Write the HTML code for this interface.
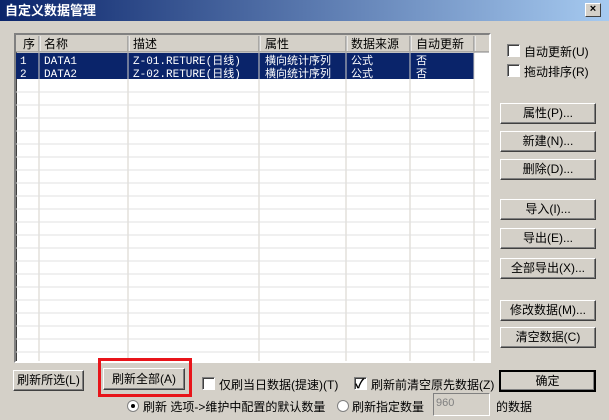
<!DOCTYPE html>
<html><head><meta charset="utf-8"><style>
*{box-sizing:border-box;margin:0;padding:0}
body{width:609px;height:420px;background:#d4d0c8;font:12px "Liberation Sans","Noto Sans CJK SC","WenQuanYi Zen Hei",sans-serif;position:relative;overflow:hidden;color:#000}
.a{position:absolute}
.title{left:0;top:0;width:609px;height:21px;background:linear-gradient(90deg,#0a246a,#a6caf0);color:#fff;font-weight:bold;font-size:13px;line-height:21px;padding-left:5px}
.close{left:585px;top:3px;width:16px;height:14px;background:#d4d0c8;border:1px solid;border-color:#fff #404040 #404040 #fff;color:#000;font-size:11px;line-height:11px;text-align:center;font-weight:bold}
.btn{position:absolute;background:#d4d0c8;border:1px solid;border-color:#fff #404040 #404040 #fff;box-shadow:inset -1px -1px #808080;text-align:center;font-size:12px}
.list{left:14px;top:33px;width:477px;height:330px;background:#fff;border:2px solid;border-color:#808080 #fff #fff #808080;box-shadow:inset 1px 1px #404040;overflow:hidden}
.cb{position:absolute;width:13px;height:13px;background:#fff;border:1px solid;border-color:#808080 #fff #fff #808080;box-shadow:inset 1px 1px #404040}
.rd{position:absolute;width:12px;height:12px;border-radius:50%;background:#fff;border:1px solid #808080}
.t{position:absolute;white-space:nowrap;font-size:12px}
</style></head><body>
<div class="a title">自定义数据管理</div>
<div class="a close">×</div>
<div class="a list">
<svg width="477" height="330" style="position:absolute;left:-2px;top:-2px">
<rect x="2" y="2" width="473" height="17" fill="#d4d0c8"/>
<rect x="2" y="20" width="458" height="26" fill="#0a246a"/>
<g stroke="#d4d0c8">
<line x1="25" y1="2" x2="25" y2="330"/><line x1="114" y1="2" x2="114" y2="330"/><line x1="245" y1="2" x2="245" y2="330"/><line x1="332" y1="2" x2="332" y2="330"/><line x1="396" y1="2" x2="396" y2="330"/><line x1="460" y1="2" x2="460" y2="330"/>
</g>
<g stroke="#e0e0e0">
<line x1="2" y1="59" x2="475" y2="59"/><line x1="2" y1="72" x2="475" y2="72"/><line x1="2" y1="85" x2="475" y2="85"/><line x1="2" y1="98" x2="475" y2="98"/><line x1="2" y1="111" x2="475" y2="111"/><line x1="2" y1="124" x2="475" y2="124"/><line x1="2" y1="137" x2="475" y2="137"/><line x1="2" y1="150" x2="475" y2="150"/><line x1="2" y1="163" x2="475" y2="163"/><line x1="2" y1="176" x2="475" y2="176"/><line x1="2" y1="189" x2="475" y2="189"/><line x1="2" y1="202" x2="475" y2="202"/><line x1="2" y1="215" x2="475" y2="215"/><line x1="2" y1="228" x2="475" y2="228"/><line x1="2" y1="241" x2="475" y2="241"/><line x1="2" y1="254" x2="475" y2="254"/><line x1="2" y1="267" x2="475" y2="267"/><line x1="2" y1="280" x2="475" y2="280"/><line x1="2" y1="293" x2="475" y2="293"/><line x1="2" y1="306" x2="475" y2="306"/><line x1="2" y1="319" x2="475" y2="319"/>
</g>
<g stroke="#808080"><line x1="25" y1="3" x2="25" y2="18"/><line x1="114" y1="3" x2="114" y2="18"/><line x1="245" y1="3" x2="245" y2="18"/><line x1="332" y1="3" x2="332" y2="18"/><line x1="396" y1="3" x2="396" y2="18"/><line x1="460" y1="3" x2="460" y2="18"/><line x1="2" y1="19" x2="475" y2="19"/></g>
<g stroke="#fff"><line x1="26" y1="3" x2="26" y2="18"/><line x1="115" y1="3" x2="115" y2="18"/><line x1="246" y1="3" x2="246" y2="18"/><line x1="333" y1="3" x2="333" y2="18"/><line x1="397" y1="3" x2="397" y2="18"/><line x1="461" y1="3" x2="461" y2="18"/></g>
<g font-size="12" font-family="Liberation Sans,Noto Sans CJK SC,sans-serif">
<text x="9" y="15">序</text><text x="30" y="15">名称</text><text x="119" y="15">描述</text><text x="251" y="15">属性</text><text x="337" y="15">数据来源</text><text x="402" y="15">自动更新</text>
<g fill="#fff" font-family="Liberation Mono,Noto Sans CJK SC,monospace" font-size="11">
<text x="6" y="31">1</text><text x="30" y="31">DATA1</text><text x="119" y="31">Z-01.RETURE(日线)</text><text x="251" y="31">横向统计序列</text><text x="337" y="31">公式</text><text x="402" y="31">否</text>
<text x="6" y="44">2</text><text x="30" y="44">DATA2</text><text x="119" y="44">Z-02.RETURE(日线)</text><text x="251" y="44">横向统计序列</text><text x="337" y="44">公式</text><text x="402" y="44">否</text>
</g></g>
</svg>
</div>
<div class="cb" style="left:507px;top:44px"></div><div class="t" style="left:524px;top:43px">自动更新(U)</div>
<div class="cb" style="left:507px;top:64px"></div><div class="t" style="left:524px;top:63px">拖动排序(R)</div>
<div class="btn" style="left:500px;top:103px;width:96px;height:21px;line-height:19px">属性(P)...</div>
<div class="btn" style="left:500px;top:131px;width:96px;height:21px;line-height:19px">新建(N)...</div>
<div class="btn" style="left:500px;top:159px;width:96px;height:21px;line-height:19px">删除(D)...</div>
<div class="btn" style="left:500px;top:199px;width:96px;height:21px;line-height:19px">导入(I)...</div>
<div class="btn" style="left:500px;top:228px;width:96px;height:21px;line-height:19px">导出(E)...</div>
<div class="btn" style="left:500px;top:258px;width:96px;height:21px;line-height:19px">全部导出(X)...</div>
<div class="btn" style="left:500px;top:300px;width:96px;height:21px;line-height:19px">修改数据(M)...</div>
<div class="btn" style="left:500px;top:327px;width:96px;height:21px;line-height:19px">清空数据(C)</div>
<div class="btn" style="left:13px;top:370px;width:71px;height:21px;line-height:19px">刷新所选(L)</div>
<div class="btn" style="left:103px;top:368px;width:82px;height:22px;line-height:20px">刷新全部(A)</div>
<div class="a" style="left:98px;top:358px;width:94px;height:39px;border:3px solid #e8141a"></div>
<div class="cb" style="left:202px;top:377px"></div><div class="t" style="left:219px;top:376px">仅刷当日数据(提速)(T)</div>
<div class="cb" style="left:354px;top:377px"></div><div class="t" style="left:355px;top:373px;font-size:13px;font-weight:bold">✓</div><div class="t" style="left:371px;top:376px">刷新前清空原先数据(Z)</div>
<div class="btn" style="left:499px;top:370px;width:97px;height:22px;line-height:18px;border:2px solid #000">确定</div>
<div class="rd" style="left:127px;top:400px"></div><div class="a" style="left:131px;top:404px;width:4px;height:4px;background:#000;border-radius:50%"></div>
<div class="t" style="left:143px;top:398px">刷新 选项-&gt;维护中配置的默认数量</div>
<div class="rd" style="left:337px;top:400px"></div>
<div class="t" style="left:352px;top:398px">刷新指定数量</div>
<div class="a" style="left:433px;top:393px;width:57px;height:23px;background:#d4d0c8;border:1px solid;border-color:#808080 #fff #fff #808080;color:#808080;font-size:11px;padding:3px 2px">960</div>
<div class="t" style="left:496px;top:398px">的数据</div>
</body></html>
